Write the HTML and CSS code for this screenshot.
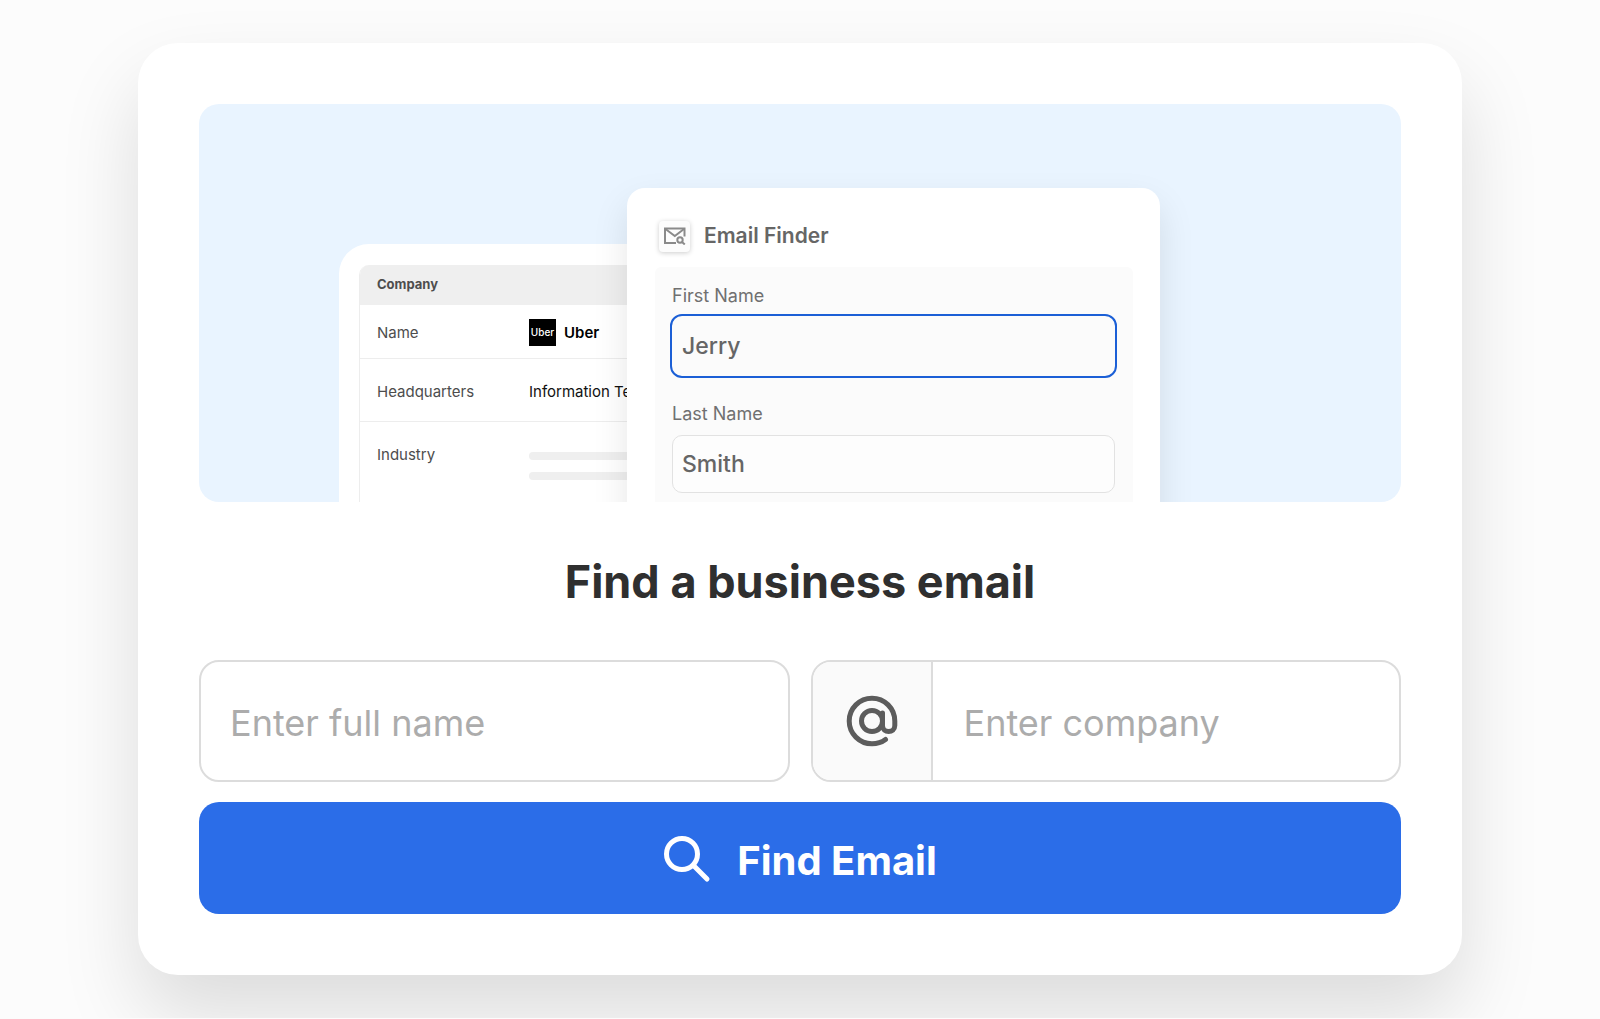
FILE: index.html
```html
<!DOCTYPE html>
<html lang="en">
<head>
    <meta charset="UTF-8">
    <meta name="viewport" content="width=device-width, initial-scale=1.0">
    <title>Find a business email</title>
    <link rel="stylesheet" href="styles.css">
</head>
<body>
<main class="card">
    <div class="preview">
        <div class="company">
            <table class="company_table">
                <colgroup>
                    <col class="col_label">
                    <col>
                </colgroup>
                <thead>
                    <tr><th colspan="2">Company</th></tr>
                </thead>
                <tbody>
                    <tr class="row_name">
                        <td>Name</td>
                        <td>
                            <div class="brand"><span class="brand_logo">Uber</span><b>Uber</b></div>
                        </td>
                    </tr>
                    <tr class="row_hq">
                        <td>Headquarters</td>
                        <td class="dark">Information Te</td>
                    </tr>
                    <tr class="row_industry">
                        <td>Industry</td>
                        <td>
                            <div class="bar"></div>
                            <div class="bar"></div>
                        </td>
                    </tr>
                </tbody>
            </table>
        </div>

        <div class="finder">
            <div class="finder_head">
                <span class="finder_icon">
                    <svg width="22" height="18" viewBox="0 0 22 18" fill="none" stroke="#8a8a8a" stroke-width="2">
                        <path d="M12 16H1V1.500H20.500V9.500"/>
                        <path d="M1.500 2L10.800 9L20 2"/>
                        <circle cx="16" cy="13" r="2.700"/>
                        <path d="M18 15L20.800 17.500"/>
                    </svg>
                </span>
                <span class="finder_title">Email Finder</span>
            </div>
            <div class="finder_body">
                <label for="first">First Name</label>
                <input class="mini active" id="first" type="text" value="Jerry">
                <label for="last">Last Name</label>
                <input class="mini" id="last" type="text" value="Smith">
            </div>
        </div>
    </div>

    <h1 class="title">Find a business email</h1>

    <form class="form">
        <input class="field" type="text" placeholder="Enter full name" aria-label="Full name">
        <div class="field_group">
            <span class="at">
                <svg width="52" height="52" viewBox="0 0 52 52" fill="none" stroke="#5c5c5c" stroke-width="5" stroke-linecap="round">
                    <circle cx="26" cy="26" r="10.500"/>
                    <path d="M36.500 18V30.500C36.500 38.500 48.800 38.500 48.800 30.500V26A22.800 22.800 0 1 0 26 48.800C31 48.800 35.500 47.500 39.500 44.500"/>
                </svg>
            </span>
            <input type="text" placeholder="Enter company" aria-label="Company">
        </div>
        <button class="btn_find" type="submit">
            <svg width="48" height="48" viewBox="0 0 48 48" fill="none" stroke="#fff" stroke-width="5" stroke-linecap="round">
                <circle cx="19" cy="18" r="15.500"/>
                <path d="M30.500 29.500L44 43"/>
            </svg>
            Find Email
        </button>
    </form>
</main>
</body>
</html>
```
FILE: styles.css
```css
* { box-sizing: border-box; }
body {
    margin: 0;
    padding: 43px 24px;
    background: #fcfcfc;
    font-family: Inter, "Liberation Sans", sans-serif;
}
input, button { font-family: inherit; min-width: 0; }

.card {
    max-width: 1324px;
    margin: 0 auto;
    padding: 61px;
    background: #fff;
    border-radius: 40px;
    box-shadow: 0 40px 80px rgba(0, 0, 0, 0.13);
}

/* preview */
.preview {
    display: flex;
    align-items: flex-start;
    height: 398px;
    padding: 84px 241px 0 140px;
    background: #e9f4ff;
    border-radius: 20px;
    overflow: hidden;
}
.company {
    flex: 0 0 288px;
    height: 300px;
    margin-top: 56px;
    padding: 21px 0 0 20px;
    background: #fff;
    border-radius: 30px 0 0 0;
}
.company_table {
    width: 268px;
    border-collapse: separate;
    border-spacing: 0;
    table-layout: fixed;
    border-left: 1px solid #ededed;
    border-radius: 10px 0 0 0;
    overflow: hidden;
    font-size: 15px;
    color: #4d4d4d;
}
.col_label { width: 169px; }
.company_table th {
    height: 40px;
    padding: 0 0 2px 17px;
    background: #efefef;
    font-size: 13px;
    font-weight: 700;
    text-align: left;
}
.company_table td {
    padding: 2px 0 0;
    border-bottom: 1px solid #ededed;
    white-space: nowrap;
}
.company_table td:first-child { padding-left: 17px; }
.company_table .dark { color: #111; }
.row_name td { height: 54px; }
.row_hq td { height: 63px; }
.company_table .row_industry td {
    height: 120px;
    padding-top: 23px;
    vertical-align: top;
}
.brand {
    display: flex;
    align-items: center;
    gap: 8px;
    color: #000;
}
.brand b { font-weight: 600; }
.brand_logo {
    width: 27px;
    height: 27px;
    line-height: 26px;
    background: #000;
    color: #fff;
    font-size: 10px;
    font-weight: 500;
    text-align: center;
}
.bar {
    height: 8px;
    margin: 7px 0 12px;
    background: #efefef;
    border-radius: 4px 0 0 4px;
}

.finder {
    flex: 1;
    position: relative;
    height: 340px;
    padding: 32px 27px 0 28px;
    background: #fff;
    border-radius: 18px 18px 0 0;
    box-shadow: 0 16px 36px rgba(0, 0, 0, 0.1);
}
.finder_head {
    display: flex;
    align-items: center;
    gap: 14px;
    height: 32px;
    padding-left: 4px;
}
.finder_icon {
    display: flex;
    justify-content: center;
    align-items: center;
    width: 31px;
    height: 31px;
    background: #fcfcfc;
    border-radius: 4px;
    box-shadow: 0 1px 5px rgba(0, 0, 0, 0.2);
}
.finder_title {
    padding-bottom: 2px;
    font-size: 21px;
    font-weight: 600;
    color: #666;
}
.finder_body {
    display: flex;
    flex-direction: column;
    height: 260px;
    margin-top: 15px;
    padding: 17px 16px 0;
    background: #fbfbfb;
    border-radius: 6px;
}
.finder_body label {
    padding-left: 1px;
    font-size: 18px;
    line-height: 24px;
    color: #707070;
}
.mini {
    height: 58px;
    margin: 9px 2px 0 1px;
    padding: 0 9px;
    background: #fdfdfd;
    border: 1px solid #e2e2e2;
    border-radius: 10px;
    font-size: 23px;
    font-weight: 500;
    color: #666;
}
.mini.active {
    height: 64px;
    margin: 6px 0 24px -1px;
    padding: 0 10px;
    background: #fbfbfb;
    border: 2px solid #1b5fd6;
    border-radius: 12px;
}

/* search form */
.title {
    margin: 50px 0 48px;
    font-size: 45px;
    line-height: 60px;
    font-weight: 700;
    text-align: center;
    color: #2f2f2f;
}
.form {
    display: grid;
    grid-template-columns: 1fr 1fr;
    gap: 20px 21px;
}
.field, .field_group {
    height: 122px;
    background: #fff;
    border: 2px solid #dcdcdc;
    border-radius: 20px;
}
.field { padding: 4px 29px 0; }
.field_group {
    display: flex;
    overflow: hidden;
}
.field_group input {
    flex: 1;
    padding: 4px 31px 0;
    border: 0;
    background: none;
}
.at {
    display: flex;
    justify-content: center;
    align-items: center;
    width: 120px;
    background: #fafafa;
    border-right: 2px solid #dcdcdc;
}
.field, .field_group input {
    font-size: 36px;
    color: #2f2f2f;
}
.form input::placeholder { color: #acacac; }
.btn_find {
    grid-column: 1 / -1;
    display: flex;
    justify-content: center;
    align-items: center;
    gap: 26px;
    height: 112px;
    padding: 4px 24px 0;
    background: #2b6de8;
    border: 0;
    border-radius: 20px;
    color: #fff;
    font-size: 40px;
    font-weight: 700;
}

@media screen and (max-width: 1200px) {
    .preview { padding-left: 40px; padding-right: 40px; }
}
@media screen and (max-width: 768px) {
    .card { padding: 24px; }
    .company { display: none; }
    .form { grid-template-columns: 1fr; }
}
```
